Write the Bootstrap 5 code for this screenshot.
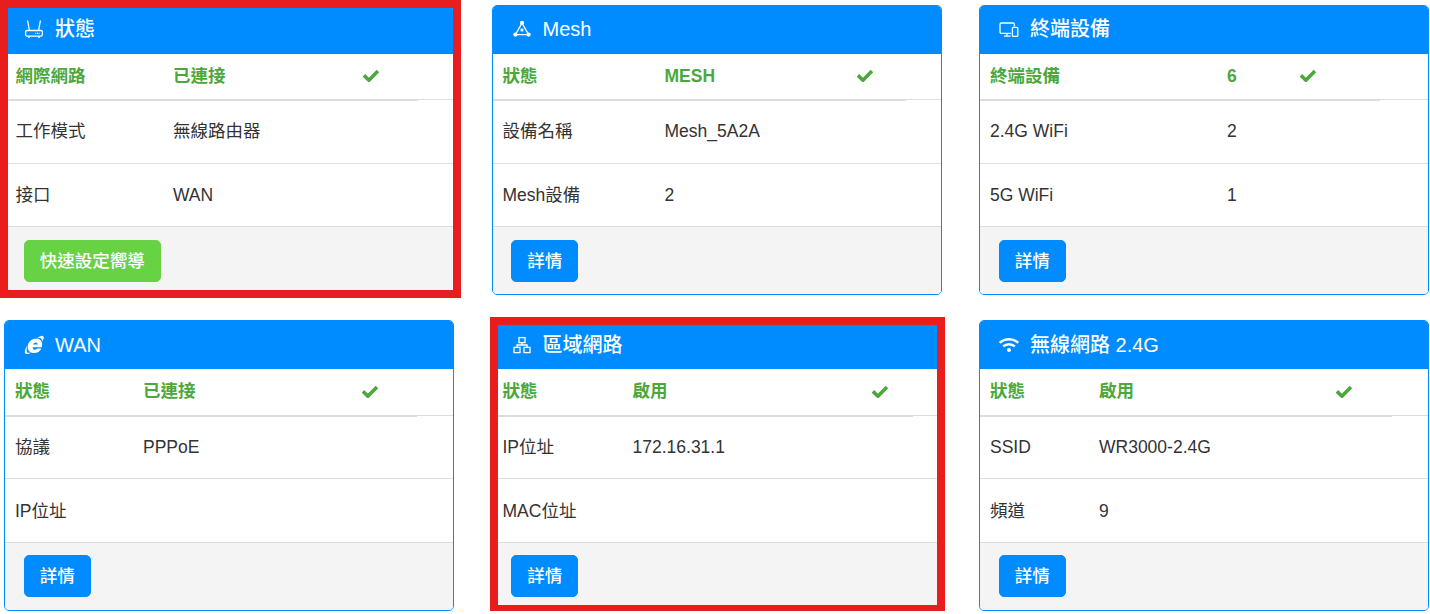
<!DOCTYPE html>
<html lang="zh-Hant">
<head>
<meta charset="utf-8">
<title>狀態</title>
<link rel="stylesheet" href="https://cdn.jsdelivr.net/npm/bootstrap@5.3.0/dist/css/bootstrap.min.css">
<style>
body{background:#fff;font-family:"Liberation Sans","Noto Sans CJK TC",sans-serif;font-size:17.5px;color:#333;overflow:hidden}
.dash{display:grid;grid-template-columns:repeat(3,450px);column-gap:37.5px;row-gap:25px;padding:5px 0 0 4px;align-items:start}
.panel{position:relative;border:1px solid #008cff;border-radius:5px;overflow:visible;background:#fff}
.panel .card-header{height:48px;display:flex;align-items:center;gap:11px;padding:0 0 2px 19px;background:#008cff;color:#fff;font-size:20px;font-weight:500;border:0;border-radius:4px 4px 0 0;white-space:nowrap}
.panel-low .card-header{padding-bottom:0}
.panel .card-header svg{flex:none;display:block}
.info{table-layout:fixed;width:100%;margin:0;border-collapse:separate;border-spacing:0;color:#333;--bs-table-color:#333}
.info td{padding:0;border:0;border-bottom:1px solid #ddd;vertical-align:middle;box-shadow:none;white-space:nowrap;line-height:1.4;height:64px}
.info td:first-child{padding-left:10px}
.info-wide td:first-child{padding-left:10.5px}
.info tr:last-child td{border-bottom:0;height:62px;padding-top:1px}
.info .lead-row td{height:46px;font-weight:700;color:#4ca83c}
.info .lead-row td:nth-child(3){padding-bottom:3px}
.info .lead-row td:not(:last-child){box-shadow:0 1px 0 #ddd}
.panel-low .info .lead-row td{height:47px;padding-bottom:3px}
.panel-low .info td{height:63px;padding-top:1px}
.panel-low .info tr:last-child td{height:63px}
.info svg{display:block}
.panel .card-footer{height:68px;padding:13px 0 0 18.8px;background:#f4f4f4;border:0;border-top:1px solid #ddd;border-radius:0 0 4px 4px}
.panel-low .card-footer{padding-top:12px}
.go{height:42px;padding:0 15px;font-size:17.5px;font-weight:500;line-height:40px;color:#fff;background:#008cff;border:1px solid #008cff;border-radius:5px}
.go-green{background:#66d244;border-color:#66d244}
.go:hover{color:#fff}
.alert-frame{position:absolute;border:8px solid #e81e1e;pointer-events:none}
.frame-a{left:-5px;top:-6px;width:461px;height:298px}
.frame-b{left:-3px;top:-4px;width:455px;height:296px}
.w1a{width:168px}.w1b{width:190px}.w1c{width:55px}
.w2a{width:172px}.w2b{width:192px}.w2c{width:49px}
.w3a{width:247px}.w3b{width:73px}.w3c{width:80px}
.w4a{width:138px}.w4b{width:219px}.w4c{width:55px}
.w5a{width:140px}.w5b{width:239px}.w5c{width:41px}
.w6a{width:119px}.w6b{width:237px}.w6c{width:56px}
</style>
</head>
<body>
<svg width="0" height="0" class="position-absolute">
<defs>
<symbol id="tick" viewBox="0 0 16 13"><path d="M.9 6.400 5.900 11.200 15 1.900" fill="none" stroke="#4ca83c" stroke-width="3.600"/></symbol>
</defs>
</svg>
<div class="dash">

<div class="card panel">
  <div class="card-header">
    <svg width="20" height="20" viewBox="0 0 20 20" fill="none" stroke="#fff" stroke-width="1.300"><path d="M3.600 1.500 5.400 11.500M16.400 1.500 14.600 11.500"/><rect x="1.600" y="11.500" width="16.800" height="5.600" rx="1.600"/><path d="M4 18.200h2M14 18.200h2"/><path d="M11.400 14.300h4.400" stroke-dasharray="1 .6"/></svg>
    <span>狀態</span>
  </div>
  <table class="table info info-wide">
    <colgroup><col class="w1a"><col class="w1b"><col class="w1c"><col></colgroup>
    <tr class="lead-row"><td>網際網路</td><td>已連接</td><td><svg width="16" height="13"><use href="#tick"/></svg></td><td></td></tr>
    <tr><td>工作模式</td><td>無線路由器</td><td></td><td></td></tr>
    <tr><td>接口</td><td>WAN</td><td></td><td></td></tr>
  </table>
  <div class="card-footer"><a class="btn go go-green" href="#">快速設定嚮導</a></div>
  <div class="alert-frame frame-a"></div>
</div>

<div class="card panel">
  <div class="card-header">
    <svg width="20" height="20" viewBox="0 0 20 20" fill="none" stroke="#fff" stroke-width="1.300"><path d="M10 4 3.400 15.600H16.600Z"/><circle cx="10" cy="3.800" r="2.100" fill="#fff" stroke="none"/><circle cx="3.400" cy="15.600" r="2.100" fill="#fff" stroke="none"/><circle cx="16.600" cy="15.600" r="2.100" fill="#fff" stroke="none"/><rect x="8.600" y="9.600" width="2.800" height="2.800" fill="#fff" stroke="none"/></svg>
    <span>Mesh</span>
  </div>
  <table class="table info">
    <colgroup><col class="w2a"><col class="w2b"><col class="w2c"><col></colgroup>
    <tr class="lead-row"><td>狀態</td><td>MESH</td><td><svg width="16" height="13"><use href="#tick"/></svg></td><td></td></tr>
    <tr><td>設備名稱</td><td>Mesh_5A2A</td><td></td><td></td></tr>
    <tr><td>Mesh設備</td><td>2</td><td></td><td></td></tr>
  </table>
  <div class="card-footer"><a class="btn go" href="#">詳情</a></div>
</div>

<div class="card panel">
  <div class="card-header">
    <svg width="20" height="20" viewBox="0 0 20 20" fill="none" stroke="#fff" stroke-width="1.300"><path d="M12 14.400H2.400A1.400 1.400 0 0 1 1 13V5.400A1.400 1.400 0 0 1 2.400 4H14A1.400 1.400 0 0 1 15.400 5.400V7.600"/><path d="M8 14.400V17M5 17.200H11.600"/><rect x="13.400" y="8.400" width="5.400" height="9" rx="1"/></svg>
    <span>終端設備</span>
  </div>
  <table class="table info">
    <colgroup><col class="w3a"><col class="w3b"><col class="w3c"><col></colgroup>
    <tr class="lead-row"><td>終端設備</td><td>6</td><td><svg width="16" height="13"><use href="#tick"/></svg></td><td></td></tr>
    <tr><td>2.4G WiFi</td><td>2</td><td></td><td></td></tr>
    <tr><td>5G WiFi</td><td>1</td><td></td><td></td></tr>
  </table>
  <div class="card-footer"><a class="btn go" href="#">詳情</a></div>
</div>

<div class="card panel panel-low">
  <div class="card-header">
    <svg width="20" height="20" viewBox="0 0 20 20"><g transform="translate(2.200 0) skewX(-8)"><path fill="#fff" fill-rule="evenodd" d="M10.400 3.600c4.300 0 7 2.900 7 7 0 .6 0 1.100-.1 1.700H8.200c.1 1.500 1 2.400 2.400 2.400 1 0 1.700-.4 2.100-1.200h4.400c-1 3-3.500 4.600-6.700 4.600-4.300 0-7.300-2.900-7.300-7.100 0-4.400 3.200-7.400 7.800-7.400ZM8.200 9.500h4.600c-.1-1.300-1-2.100-2.300-2.100-1.200 0-2.100.8-2.300 2.100Z"/></g><path fill="#fff" d="M13 3.400C16.200.6 18.900.1 19.600 1.700c.4 1-.1 2.600-1.300 4.500-.2-1.300-.8-2.300-1.600-3-.9-.4-2.200-.4-3.700.2ZM3.200 10.500C.9 14.300.2 17.300 1.300 18.500c1.200 1.200 3.800.6 6.500-1.200-2.200.7-3.900.7-4.600 0-.9-.9-.7-3.400 0-6.800Z"/></svg>
    <span>WAN</span>
  </div>
  <table class="table info">
    <colgroup><col class="w4a"><col class="w4b"><col class="w4c"><col></colgroup>
    <tr class="lead-row"><td>狀態</td><td>已連接</td><td><svg width="16" height="13"><use href="#tick"/></svg></td><td></td></tr>
    <tr><td>協議</td><td>PPPoE</td><td></td><td></td></tr>
    <tr><td>IP位址</td><td></td><td></td><td></td></tr>
  </table>
  <div class="card-footer"><a class="btn go" href="#">詳情</a></div>
</div>

<div class="card panel panel-low">
  <div class="card-header">
    <svg width="20" height="20" viewBox="0 0 20 20" fill="none" stroke="#fff" stroke-width="1.300"><rect x="7" y="2.600" width="6" height="5"/><rect x="2" y="12.400" width="6" height="5.200"/><rect x="12" y="12.400" width="6" height="5.200"/><path d="M10 7.600V10M5 12.400V10H15V12.400"/></svg>
    <span>區域網路</span>
  </div>
  <table class="table info">
    <colgroup><col class="w5a"><col class="w5b"><col class="w5c"><col></colgroup>
    <tr class="lead-row"><td>狀態</td><td>啟用</td><td><svg width="16" height="13"><use href="#tick"/></svg></td><td></td></tr>
    <tr><td>IP位址</td><td>172.16.31.1</td><td></td><td></td></tr>
    <tr><td>MAC位址</td><td></td><td></td><td></td></tr>
  </table>
  <div class="card-footer"><a class="btn go" href="#">詳情</a></div>
  <div class="alert-frame frame-b"></div>
</div>

<div class="card panel panel-low">
  <div class="card-header">
    <svg width="20" height="20" viewBox="0 0 20 20" fill="none" stroke="#fff" stroke-width="2.500"><path d="M.8 7.800C5.800 3 14.200 3 19.200 7.800"/><path d="M4.200 11.400C7.400 8.400 12.600 8.400 15.800 11.400"/><circle cx="10" cy="15" r="2" fill="#fff" stroke="none"/></svg>
    <span>無線網路 2.4G</span>
  </div>
  <table class="table info">
    <colgroup><col class="w6a"><col class="w6b"><col class="w6c"><col></colgroup>
    <tr class="lead-row"><td>狀態</td><td>啟用</td><td><svg width="16" height="13"><use href="#tick"/></svg></td><td></td></tr>
    <tr><td>SSID</td><td>WR3000-2.4G</td><td></td><td></td></tr>
    <tr><td>頻道</td><td>9</td><td></td><td></td></tr>
  </table>
  <div class="card-footer"><a class="btn go" href="#">詳情</a></div>
</div>

</div>
<script src="https://cdn.jsdelivr.net/npm/bootstrap@5.3.0/dist/js/bootstrap.bundle.min.js"></script>
</body>
</html>
